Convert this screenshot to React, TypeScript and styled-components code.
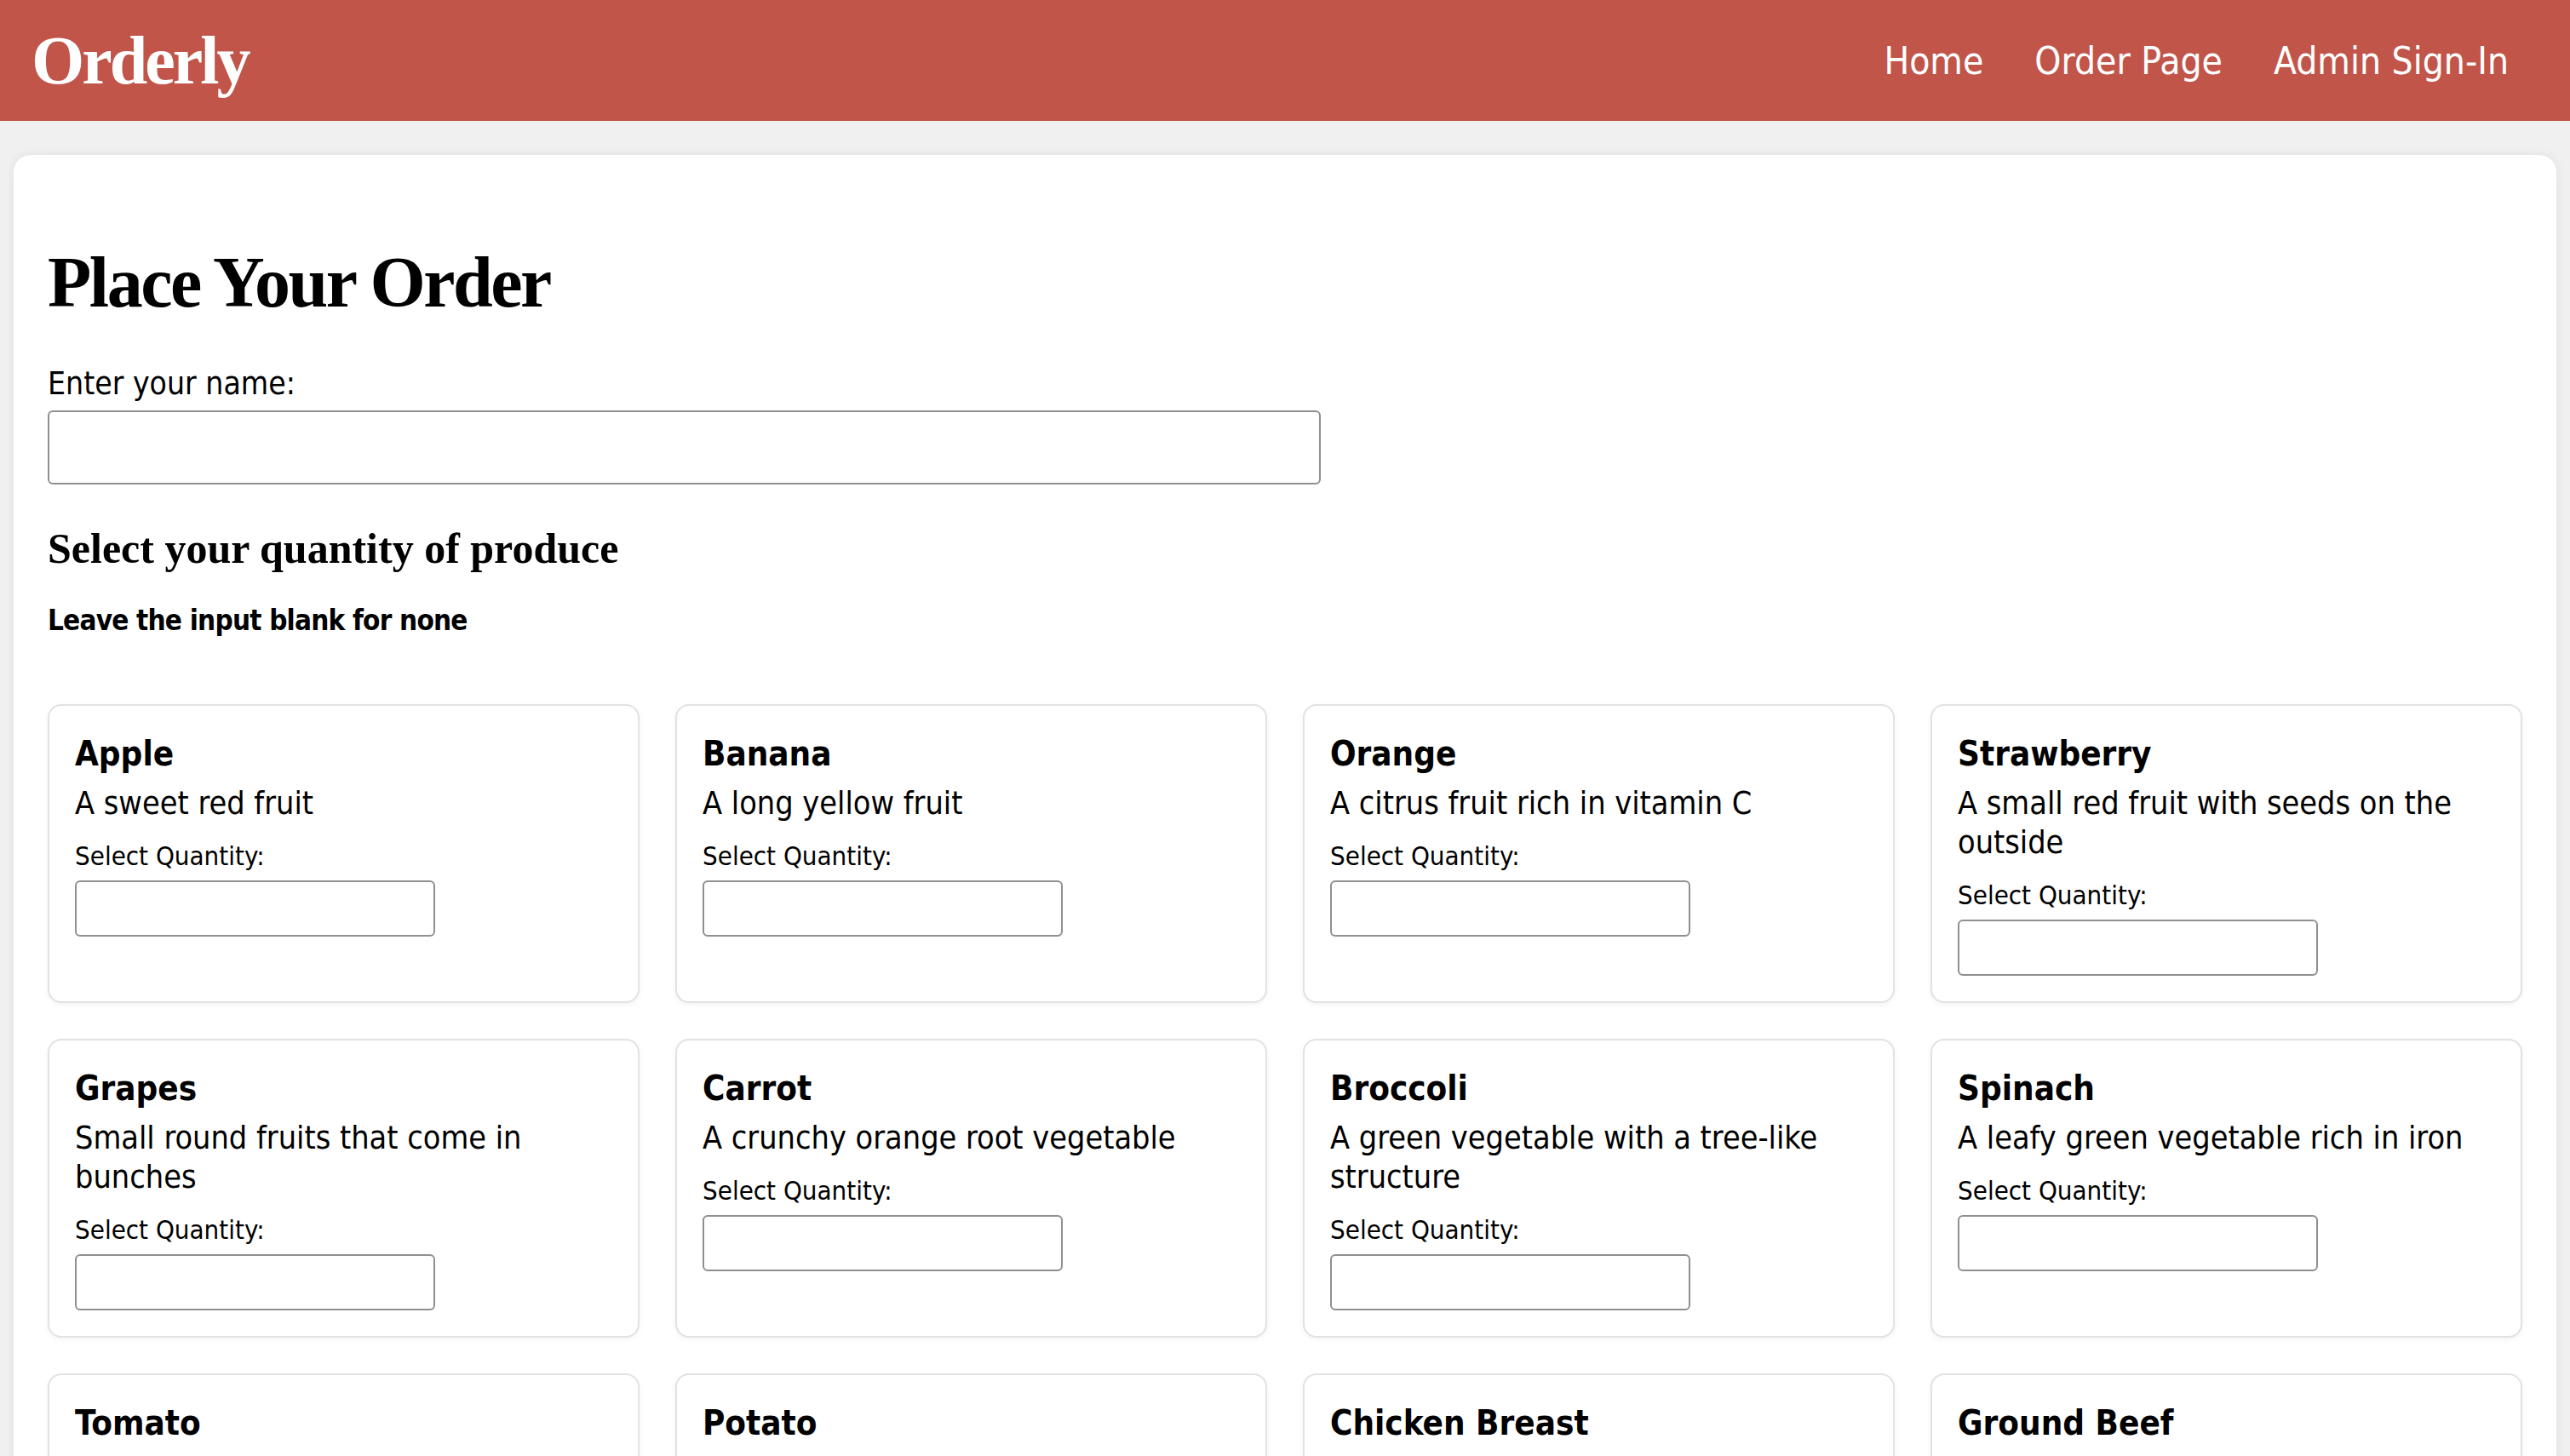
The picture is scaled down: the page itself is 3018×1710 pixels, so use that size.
import React from "react";
import styled, { createGlobalStyle } from "styled-components";

const GlobalStyle = createGlobalStyle`
  html, body {
    margin: 0;
    padding: 0;
    background: #f0f0f0;
  }
  body {
    font-family: "DejaVu Sans Condensed", "DejaVu Sans", sans-serif;
    color: #000;
  }
  * { box-sizing: border-box; }
`;

const Header = styled.header`
  height: 142px;
  background: #c1554a;
  display: flex;
  align-items: center;
  justify-content: space-between;
  padding: 0 72px 0 37px;
`;

const Logo = styled.div`
  font-family: "Liberation Serif", "Times New Roman", serif;
  font-weight: 700;
  font-size: 80px;
  line-height: 1;
  letter-spacing: -3px;
  color: #fff;
`;

const Nav = styled.nav`
  display: flex;
  align-items: center;
  gap: 60px;
`;

const NavLink = styled.a`
  font-family: "DejaVu Sans Condensed", "DejaVu Sans", sans-serif;
  font-size: 44px;
  color: #fff;
  text-decoration: none;
  cursor: pointer;
`;

const Panel = styled.main`
  margin: 40px 16px 0;
  padding: 40px 40px 60px;
  background: #fff;
  border-radius: 20px;
  box-shadow: 0 0 12px rgba(0, 0, 0, 0.08);
`;

const Title = styled.h1`
  margin: 68px 0 0;
  font-family: "Liberation Serif", "Times New Roman", serif;
  font-weight: 700;
  font-size: 84px;
  line-height: 84px;
  letter-spacing: -2.5px;
`;

const FieldLabel = styled.label`
  display: block;
  margin-top: 55px;
  font-size: 37px;
  line-height: 44px;
`;

const NameInput = styled.input`
  display: block;
  margin-top: 9px;
  width: 1495px;
  height: 87px;
  border: 2px solid #8f8f8f;
  border-radius: 6px;
  background: #fff;
  font-size: 34px;
  padding: 0 12px;
`;

const SubTitle = styled.h2`
  margin: 50px 0 0;
  font-family: "Liberation Serif", "Times New Roman", serif;
  font-weight: 700;
  font-size: 50px;
  line-height: 50px;
  letter-spacing: 0;
`;

const Hint = styled.p`
  margin: 40px 0 0;
  font-weight: 700;
  font-size: 33px;
  line-height: 40px;
  letter-spacing: -0.8px;
`;

const Grid = styled.div`
  margin-top: 78px;
  display: grid;
  grid-template-columns: repeat(4, 1fr);
  column-gap: 42px;
  row-gap: 42px;
`;

const Card = styled.div`
  border: 2px solid #e2e2e2;
  border-radius: 16px;
  padding: 32px 30px 30px;
  background: #fff;
  box-shadow: 0 2px 6px rgba(0, 0, 0, 0.05);
`;

const ItemName = styled.h3`
  margin: 0;
  font-weight: 700;
  font-size: 40px;
  line-height: 48px;
`;

const ItemDesc = styled.p`
  margin: 11px 0 0;
  font-size: 37.5px;
  line-height: 46px;
`;

const QtyLabel = styled.label`
  display: block;
  margin-top: 20px;
  font-size: 31px;
  line-height: 38px;
`;

const QtyInput = styled.input`
  display: block;
  margin-top: 10px;
  width: 423px;
  height: 66px;
  border: 2px solid #8f8f8f;
  border-radius: 6px;
  background: #fff;
  font-size: 30px;
  padding: 0 10px;
`;

const items = [
  { name: "Apple", desc: "A sweet red fruit" },
  { name: "Banana", desc: "A long yellow fruit" },
  { name: "Orange", desc: "A citrus fruit rich in vitamin C" },
  { name: "Strawberry", desc: "A small red fruit with seeds on the outside" },
  { name: "Grapes", desc: "Small round fruits that come in bunches" },
  { name: "Carrot", desc: "A crunchy orange root vegetable" },
  { name: "Broccoli", desc: "A green vegetable with a tree-like structure" },
  { name: "Spinach", desc: "A leafy green vegetable rich in iron" },
  { name: "Tomato", desc: "A juicy red fruit used as a vegetable" },
  { name: "Potato", desc: "A starchy root vegetable" },
  { name: "Chicken Breast", desc: "A lean cut of poultry" },
  { name: "Ground Beef", desc: "Minced beef for burgers and more" },
];

export default function App() {
  return (
    <>
      <GlobalStyle />
      <Header>
        <Logo>Orderly</Logo>
        <Nav>
          <NavLink>Home</NavLink>
          <NavLink>Order Page</NavLink>
          <NavLink>Admin Sign-In</NavLink>
        </Nav>
      </Header>
      <Panel>
        <Title>Place Your Order</Title>
        <FieldLabel htmlFor="name">Enter your name:</FieldLabel>
        <NameInput id="name" type="text" />
        <SubTitle>Select your quantity of produce</SubTitle>
        <Hint>Leave the input blank for none</Hint>
        <Grid>
          {items.map((it) => (
            <Card key={it.name}>
              <ItemName>{it.name}</ItemName>
              <ItemDesc>{it.desc}</ItemDesc>
              <QtyLabel>Select Quantity:</QtyLabel>
              <QtyInput type="number" />
            </Card>
          ))}
        </Grid>
      </Panel>
    </>
  );
}
